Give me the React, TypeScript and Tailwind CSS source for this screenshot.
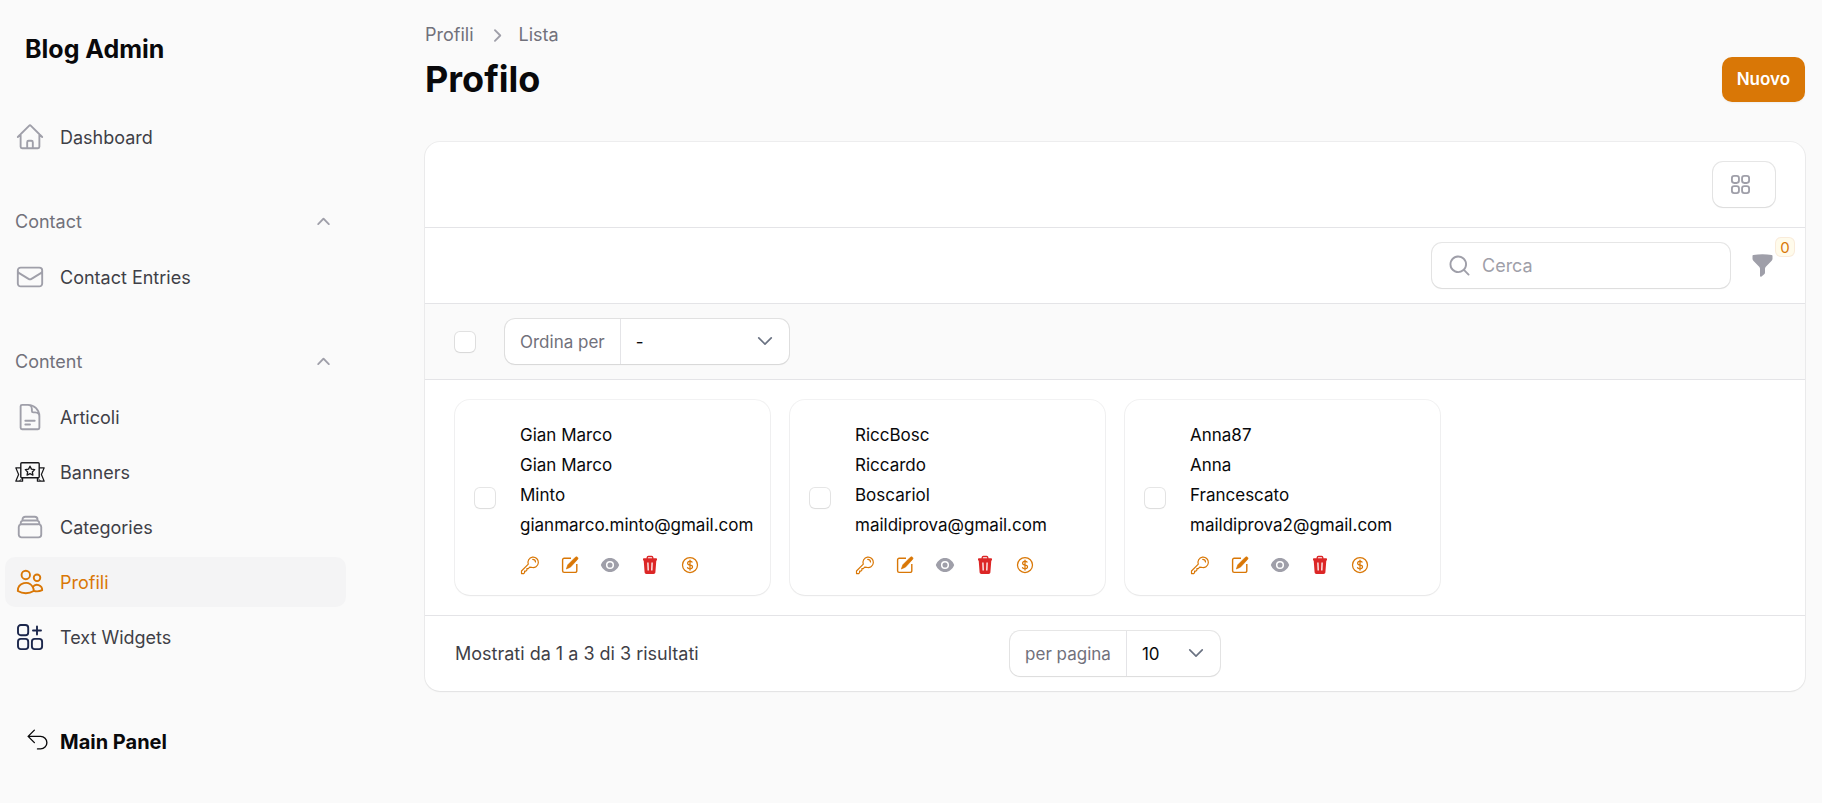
import React from "react";
import {
  HiOutlineArrowUturnLeft,
  HiOutlineChevronDown,
  HiOutlineCurrencyDollar,
  HiOutlineDocumentText,
  HiOutlineEnvelope,
  HiOutlineHome,
  HiMiniMagnifyingGlass,
  HiOutlineRectangleStack,
  HiOutlineSquares2X2,
  HiOutlineUsers,
  HiMiniChevronRight,
  HiMiniChevronUp,
  HiMiniFunnel,
} from "react-icons/hi2";

function BannerIcon() {
  return (
    <svg viewBox="0 0 30 30" fill="none" stroke="#18181b" className="size-[30px]" aria-hidden="true">
      <rect x="5.8" y="5.8" width="18.4" height="15" rx="1" strokeWidth="1.4" />
      <path d="M6 10.8H.8L3.6 17.4.8 24.2H7.6V21" strokeWidth="1.2" strokeLinejoin="round" />
      <path d="M24 10.8h5.2l-2.8 6.6 2.8 6.8h-6.8V21" strokeWidth="1.2" strokeLinejoin="round" />
      <path d="M4.5 24l3.2-3.2M25.500 24l-3.200-3.200" strokeWidth="1" />
      <path
        d="M15 9.200l1.450 2.950 3.250.47-2.350 2.300.55 3.230L15 16.630l-2.900 1.520.55-3.230-2.350-2.300 3.250-.47z"
        strokeWidth="1.300"
        strokeLinejoin="round"
      />
    </svg>
  );
}

function WidgetsIcon() {
  return (
    <svg viewBox="0 0 30 30" fill="none" stroke="#1c274c" strokeWidth="1.9" strokeLinecap="round" className="size-[30px]" aria-hidden="true">
      <rect x="3" y="3" width="10.200" height="10.200" rx="2.800" />
      <rect x="3" y="16.900" width="10.200" height="10.200" rx="2.800" />
      <rect x="16.900" y="16.900" width="10.200" height="10.200" rx="2.800" />
      <path d="M22 4.500v8M18 8.500h8" />
    </svg>
  );
}

function KeyIcon() {
  return (
    <svg viewBox="0 0 20 20" fill="none" stroke="currentColor" strokeWidth="1.200" strokeLinejoin="round" strokeLinecap="round" className="size-5" aria-hidden="true">
      <path d="M8.300 9.200A5.200 5.200 0 1 1 11.600 12.300L9.700 12.200 8.300 13.700H6.900V15.100L5.900 16.100H4.600V17.600L3.700 18.600H1.500V16z" />
      <path d="M12.700 4.300c1.500 0 2.700 1.200 2.800 2.700" />
    </svg>
  );
}

function EditIcon() {
  return (
    <svg viewBox="0 0 20 20" className="size-5" aria-hidden="true">
      <path d="M11 3.200H4.200A1.600 1.600 0 0 0 2.600 4.800v11a1.600 1.600 0 0 0 1.600 1.600h11a1.600 1.600 0 0 0 1.600-1.600V9" fill="none" stroke="currentColor" strokeWidth="1.400" />
      <path d="M15.300 2.300a1.500 1.500 0 0 1 2.300 2.100L10.400 12.200 6.300 14l1.500-4.200z" fill="currentColor" stroke="currentColor" strokeWidth=".6" strokeLinejoin="round" />
    </svg>
  );
}

function EyeIcon() {
  return (
    <svg viewBox="0 0 20 20" className="size-5" aria-hidden="true">
      <path d="M.8 10C2.500 5.700 5.900 3 10 3s7.500 2.700 9.200 7c-1.700 4.300-5.100 7-9.200 7S2.500 14.300.8 10z" fill="currentColor" />
      <circle cx="10" cy="10" r="3.300" fill="currentColor" stroke="#fff" strokeWidth="1.500" />
    </svg>
  );
}

function TrashIcon() {
  return (
    <svg viewBox="0 0 20 20" className="size-5" aria-hidden="true">
      <path d="M7.200 4V2.600A1.200 1.200 0 0 1 8.400 1.500h3.200a1.200 1.200 0 0 1 1.200 1.100V4" fill="none" stroke="currentColor" strokeWidth="1.300" />
      <path d="M3.800 3.300h12.400c.5 0 .8.3.8.8v.8c0 .4-.3.700-.7.700l-.9 11.700c-.1 1-.8 1.700-1.800 1.700H6.400c-1 0-1.700-.7-1.800-1.700L3.700 5.600A.7.700 0 0 1 3 4.900v-.8c0-.5.3-.8.800-.8z" fill="currentColor" />
      <path d="M7.900 7.500l.3 8M12.100 7.500l-.3 8" stroke="#fff" strokeWidth="1.300" />
    </svg>
  );
}

type NavEntry = { label: string; icon: React.ReactNode; active?: boolean };

function NavItem({ label, icon, active }: NavEntry) {
  return (
    <li>
      <a
        href="#"
        aria-current={active ? "page" : undefined}
        className={
          active
            ? "flex items-center gap-[15px] rounded-[10px] bg-zinc-100 p-[10px] text-[#d97706]"
            : "flex items-center gap-[15px] rounded-[10px] p-[10px] text-zinc-700"
        }
      >
        <span className={active ? "text-[#d97706]" : "text-zinc-400"}>{icon}</span>
        <span className="pt-0.5 leading-7">{label}</span>
      </a>
    </li>
  );
}

function NavGroup({ title, items }: { title?: string; items: NavEntry[] }) {
  return (
    <li className="flex flex-col gap-[5px]">
      {title && (
        <button type="button" className="flex items-center justify-between p-[10px] text-left text-zinc-500">
          {title}
          <HiMiniChevronUp className="size-[25px] text-zinc-400" />
        </button>
      )}
      <ul className="flex flex-col gap-[5px]">
        {items.map((item) => (
          <NavItem key={item.label} {...item} />
        ))}
      </ul>
    </li>
  );
}

function Check({ label }: { label: string }) {
  return (
    <input
      type="checkbox"
      aria-label={label}
      className="size-5 shrink-0 appearance-none rounded-[5px] bg-white shadow-xs ring-1 ring-zinc-950/10 checked:bg-[#d97706]"
    />
  );
}

function LabelledSelect({ id, label, options, width }: { id: string; label: string; options: string[]; width: string }) {
  return (
    <div className="flex h-[45px] items-stretch rounded-[10px] bg-white text-[17px] shadow-xs ring-1 ring-zinc-950/10">
      <label htmlFor={id} className="flex items-center border-r border-zinc-200 px-[15px] text-zinc-500">
        {label}
      </label>
      <div className="relative flex">
        <select id={id} className={`${width} appearance-none bg-transparent pl-[15px] text-zinc-950`}>
          {options.map((o) => (
            <option key={o}>{o}</option>
          ))}
        </select>
        <HiOutlineChevronDown className="pointer-events-none absolute top-3 right-3.5 size-5 text-gray-500" strokeWidth={2} />
      </div>
    </div>
  );
}

const profiles = [
  ["Gian Marco", "Gian Marco", "Minto", "gianmarco.minto@gmail.com"],
  ["RiccBosc", "Riccardo", "Boscariol", "maildiprova@gmail.com"],
  ["Anna87", "Anna", "Francescato", "maildiprova2@gmail.com"],
];

function ProfileCard({ lines }: { lines: string[] }) {
  return (
    <article className="flex items-center gap-[25px] rounded-[15px] bg-white p-5 shadow-xs ring-1 ring-zinc-950/5">
      <Check label={`Seleziona ${lines[0]}`} />
      <div className="flex min-w-0 flex-1 flex-col gap-[15px]">
        <div className="text-[17px] leading-[30px] whitespace-nowrap text-zinc-950">
          {lines.map((line, i) => (
            <p key={i}>{line}</p>
          ))}
        </div>
        <div className="flex gap-5 text-[#d97706]">
          <button type="button" aria-label="Password"><KeyIcon /></button>
          <button type="button" aria-label="Modifica"><EditIcon /></button>
          <button type="button" aria-label="Visualizza" className="text-zinc-400"><EyeIcon /></button>
          <button type="button" aria-label="Elimina" className="text-[#dc2626]"><TrashIcon /></button>
          <button type="button" aria-label="Crediti"><HiOutlineCurrencyDollar className="size-5" /></button>
        </div>
      </div>
    </article>
  );
}

export default function App() {
  return (
    <div className="flex min-h-screen bg-zinc-50 font-['Inter',sans-serif] text-[18px] leading-[30px]">
      <aside className="w-[400px] shrink-0">
        <div className="flex h-[82px] items-center px-[25px] pt-4 text-[25px] font-bold text-zinc-950">Blog Admin</div>
        <nav className="mr-[54px] ml-[5px] pt-[30px]">
          <ul className="flex flex-col gap-[35px]">
            <NavGroup items={[{ label: "Dashboard", icon: <HiOutlineHome className="size-[30px]" /> }]} />
            <NavGroup title="Contact" items={[{ label: "Contact Entries", icon: <HiOutlineEnvelope className="size-[30px]" /> }]} />
            <NavGroup
              title="Content"
              items={[
                { label: "Articoli", icon: <HiOutlineDocumentText className="size-[30px]" /> },
                { label: "Banners", icon: <BannerIcon /> },
                { label: "Categories", icon: <HiOutlineRectangleStack className="size-[30px]" /> },
                { label: "Profili", icon: <HiOutlineUsers className="size-[30px]" />, active: true },
                { label: "Text Widgets", icon: <WidgetsIcon /> },
              ]}
            />
          </ul>
        </nav>
        <a href="#" className="mt-[65px] flex items-center gap-[10px] px-[25px] text-[20px] font-bold text-zinc-950">
          <HiOutlineArrowUturnLeft className="size-[25px] self-start" strokeWidth={1.3} />
          Main Panel
        </a>
      </aside>

      <main className="min-w-0 flex-1 pt-5 pr-[17px] pb-10 pl-[25px]">
        <header className="flex items-end justify-between">
          <div>
            <nav aria-label="Breadcrumb" className="flex items-center gap-[10px] text-zinc-500">
              <a href="#">Profili</a>
              <HiMiniChevronRight className="size-[25px] text-zinc-400" />
              <a href="#">Lista</a>
            </nav>
            <h1 className="mt-[7px] text-[36px] leading-[45px] font-bold text-zinc-950">Profilo</h1>
          </div>
          <button type="button" className="rounded-[10px] bg-[#d97706] px-[15px] py-[8px] text-[17px] leading-[29px] font-semibold text-white shadow-xs">
            Nuovo
          </button>
        </header>

        <section className="mt-10 overflow-hidden rounded-[15px] bg-white shadow-xs ring-1 ring-zinc-950/5">
          <div className="flex justify-end px-[30px] py-5">
            <button type="button" aria-label="Layout" className="flex h-[45px] w-[62px] items-center rounded-[10px] bg-white pl-[15px] text-zinc-400 shadow-xs ring-1 ring-zinc-950/10">
              <HiOutlineSquares2X2 className="size-[25px]" strokeWidth={1.8} />
            </button>
          </div>
          <div className="flex items-center justify-end gap-5 border-t border-zinc-200 px-[30px] py-[15px]">
            <label className="flex h-[45px] w-[298px] items-center gap-[10px] rounded-[10px] bg-white pl-[15px] shadow-xs ring-1 ring-zinc-950/10">
              <HiMiniMagnifyingGlass className="size-[25px] text-zinc-400" />
              <input type="search" aria-label="Cerca" placeholder="Cerca" className="min-w-0 flex-1 bg-transparent outline-none placeholder:text-zinc-400" />
            </label>
            <button type="button" aria-label="Filtri" className="relative text-zinc-400">
              <HiMiniFunnel className="size-[25px]" />
              <span className="absolute -top-[15px] left-[26px] flex size-[18px] items-center justify-center rounded-[5px] bg-amber-50 text-[15px] leading-none text-[#d97706] ring-1 ring-[#d97706]/15">
                0
              </span>
            </button>
          </div>
          <div className="flex items-center gap-[30px] border-t border-zinc-200 bg-zinc-50 px-[30px] py-[15px]">
            <Check label="Seleziona tutto" />
            <LabelledSelect id="sort" label="Ordina per" options={["-"]} width="w-[168px]" />
          </div>
          <div className="grid grid-cols-4 gap-5 border-t border-zinc-200 px-[30px] py-5">
            {profiles.map((lines) => (
              <ProfileCard key={lines[0]} lines={lines} />
            ))}
          </div>
          <div className="grid grid-cols-[1fr_auto_1fr] items-center border-t border-zinc-200 px-[30px] py-[15px]">
            <span className="text-zinc-700">Mostrati da 1 a 3 di 3 risultati</span>
            <LabelledSelect id="page-size" label="per pagina" options={["10"]} width="w-[93px]" />
          </div>
        </section>
      </main>
    </div>
  );
}
